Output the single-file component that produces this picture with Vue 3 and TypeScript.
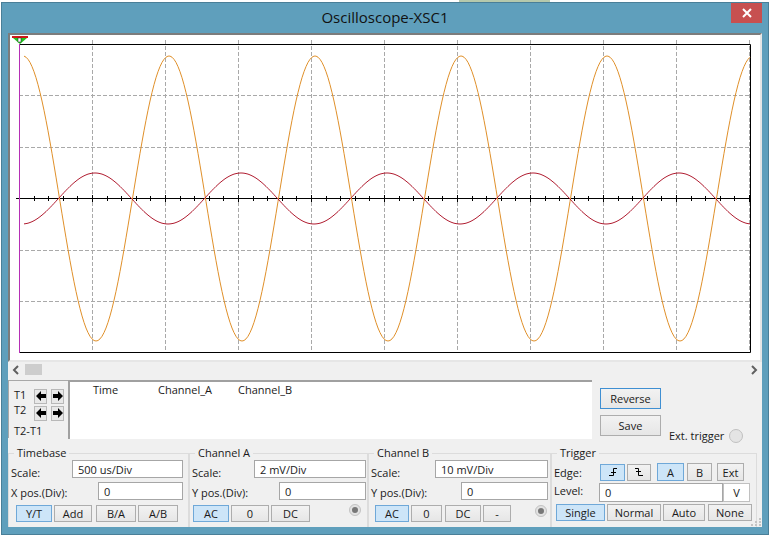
<template>
  <div class="page">
    <div class="window">
      <div class="titlebar">
        <span class="title">Oscilloscope-XSC1</span>
        <button class="close" type="button">
          <svg width="10" height="10" viewBox="0 0 10 10"><path d="M1 1l8 8M9 1l-8 8" stroke="#fff" stroke-width="2" /></svg>
        </button>
      </div>
      <div class="client">
        <div class="plot">
          <svg class="scope" width="749" height="325" viewBox="10 35 749 325">
            <path :d="gridV" class="grid" />
            <path :d="gridH" class="grid" />
            <path d="M19.5 44.5H750.5V352.5H19.5Z" fill="none" stroke="#000" />
            <path :d="ticks" stroke="#000" fill="none" />
            <path :d="orange" fill="none" stroke="#e0902a" />
            <path :d="red" fill="none" stroke="#b01c30" />
            <path d="M19.5 44V353" stroke="#b52fb5" />
            <path d="M12 36H28V38H12Z" fill="#d01818" />
            <path d="M13 38H27L20 44Z" fill="#22c422" />
            <rect x="18" y="38" width="3" height="4" fill="#fff" stroke="#222" stroke-width="0.5" />
          </svg>
        </div>
        <div class="hscroll">
          <svg width="8" height="10" viewBox="0 0 8 10"><path d="M6 1L2 5l4 4" fill="none" stroke="#606060" stroke-width="2" /></svg>
          <div class="thumb"></div>
          <svg class="right" width="8" height="10" viewBox="0 0 8 10"><path d="M2 1l4 4-4 4" fill="none" stroke="#606060" stroke-width="2" /></svg>
        </div>

        <div class="readout">
          <div class="cursors">
            <div class="cursor-row">
              <span class="t-label">T1</span>
              <button v-for="d in arrows" :key="'a' + d" class="arrow" type="button">
                <svg width="10" height="10" viewBox="0 0 10 10"><path :d="d" fill="#000" /></svg>
              </button>
            </div>
            <div class="cursor-row">
              <span class="t-label t2">T2</span>
              <button v-for="d in arrows" :key="'b' + d" class="arrow" type="button">
                <svg width="10" height="10" viewBox="0 0 10 10"><path :d="d" fill="#000" /></svg>
              </button>
            </div>
            <div class="t-diff">T2-T1</div>
          </div>
          <div class="list">
            <span class="col-time">Time</span>
            <span class="col-ch">Channel_A</span>
            <span>Channel_B</span>
          </div>
          <div class="actions">
            <div class="action-btns">
              <button type="button" class="btn focus">Reverse</button>
              <button type="button" class="btn">Save</button>
            </div>
            <div class="ext">
              <span>Ext. trigger</span>
              <span class="led"></span>
            </div>
          </div>
        </div>

        <div class="controls">
          <fieldset class="group tb">
            <legend>Timebase</legend>
            <div class="row"><label>Scale:</label><input class="wide" :value="'500 us/Div'" readonly /></div>
            <div class="row"><label>X pos.(Div):</label><input class="short" :value="'0'" readonly /></div>
            <div class="btns tb-btns">
              <button v-for="(b, i) in timebaseBtns" :key="b" type="button" :class="['btn', { on: i === 0 }]">{{ b }}</button>
            </div>
          </fieldset>

          <fieldset class="group cha">
            <legend>Channel A</legend>
            <div class="row"><label>Scale:</label><input class="wide" :value="'2 mV/Div'" readonly /></div>
            <div class="row"><label>Y pos.(Div):</label><input class="short" :value="'0'" readonly /></div>
            <div class="btns cha-btns">
              <button type="button" class="btn on">AC</button>
              <button type="button" class="btn">0</button>
              <button type="button" class="btn">DC</button>
              <span class="radio"></span>
            </div>
          </fieldset>

          <fieldset class="group chb">
            <legend>Channel B</legend>
            <div class="row"><label>Scale:</label><input class="wide" :value="'10 mV/Div'" readonly /></div>
            <div class="row"><label>Y pos.(Div):</label><input class="short" :value="'0'" readonly /></div>
            <div class="btns chb-btns">
              <button type="button" class="btn on">AC</button>
              <button type="button" class="btn">0</button>
              <button type="button" class="btn">DC</button>
              <button type="button" class="btn">-</button>
              <span class="radio"></span>
            </div>
          </fieldset>

          <fieldset class="group trig">
            <legend>Trigger</legend>
            <div class="edge-row">
              <label>Edge:</label>
              <button type="button" class="btn on edge">
                <svg width="12" height="12" viewBox="0 0 12 12"><path d="M2 9.500H6.500V2.500H10M4 6.500H9" fill="none" stroke="#000" /></svg>
              </button>
              <button type="button" class="btn edge">
                <svg width="12" height="12" viewBox="0 0 12 12"><path d="M2 2.500H5.500V9.500H10M3 5.500H8" fill="none" stroke="#000" /></svg>
              </button>
              <button type="button" class="btn on src a">A</button>
              <button type="button" class="btn src b">B</button>
              <button type="button" class="btn src x">Ext</button>
            </div>
            <div class="level-row">
              <label>Level:</label>
              <input class="level" :value="'0'" readonly />
              <span class="unit">V</span>
            </div>
            <div class="btns trig-btns">
              <button v-for="(b, i) in triggerBtns" :key="b" type="button" :class="['btn', { on: i === 0 }]">{{ b }}</button>
            </div>
          </fieldset>
        </div>
        <svg class="grip" width="10" height="8" viewBox="0 0 10 8"><path d="M8 0h2v2H8zM4 3h2v2H4zM8 3h2v2H8zM0 6h2v2H0zM4 6h2v2H4zM8 6h2v2H8z" fill="#c4c4c4" /></svg>
      </div>
    </div>
  </div>
</template>

<script setup lang="ts">
const timebaseBtns = ['Y/T', 'Add', 'B/A', 'A/B']
const triggerBtns = ['Single', 'Normal', 'Auto', 'None']
const arrows = ['M0 5l5-5v3h5v4H5v3z', 'M10 5L5 0v3H0v4h5v3z']

const top = 44
const bottom = 353
const left = 19
const right = 750

let gridV = ''
for (let x = 92.5; x < right; x += 73) gridV += `M${Math.round(x - 0.5) + 0.5} 40V${bottom}`
let gridH = ''
for (let i = 1; i < 6; i++) {
  const y = Math.floor(top + i * 51.5) + 0.5
  gridH += `M${left} ${y}H${right}`
}

// x axis with a tick every 1/5 division
let ticks = 'M16 198.500H750'
for (let x = left + 14.6; x < right; x += 14.6) {
  const major = Math.abs(((x - left) / 73) % 1) < 0.01 || Math.abs(((x - left) / 73) % 1) > 0.99
  const px = Math.round(x) + 0.5
  ticks += major ? `M${px} 195V202` : `M${px} 196V201`
}

function wave(amp: number, phase: number) {
  let d = ''
  for (let x = 24; x <= 750; x += 2) {
    const y = 198.5 + amp * Math.cos((2 * Math.PI * (x - phase)) / 146)
    d += `${d ? 'L' : 'M'}${x} ${y.toFixed(1)}`
  }
  return d
}

const orange = wave(-142.5, 23)
const red = wave(25.5, 22)
</script>

<style>
html, body { margin: 0; background: #fff; }
</style>

<style scoped>
.page { width: 770px; height: 535px; overflow: hidden; box-sizing: border-box; padding: 2px 1px 0; font-family: "Open Sans", "Liberation Sans", sans-serif; font-size: 11px; color: #1a1a1a; background: linear-gradient(to right, #fff 459px, #b6c9ac 459px, #b6c9ac 550px, #fff 550px); }
.window { height: 533px; box-sizing: border-box; background: #5f9fbc; border: 1px solid #4a7f98; padding: 0 6px 7px; }
.titlebar { height: 30px; display: flex; align-items: center; justify-content: center; position: relative; }
.title { font-size: 15px; color: #111; margin-top: -2px; }
.close { position: absolute; right: 0; top: 0; width: 31px; height: 20px; border: none; background: #c75050; padding: 0; display: flex; align-items: center; justify-content: center; }
.client { height: 494px; background: #f0f0f0; position: relative; display: flex; flex-direction: column; }
.plot { height: 329px; box-sizing: border-box; border: 2px solid #e6e6e6; border-top-color: #7c7c7c; border-left-color: #7c7c7c; background: #fff; }
.scope { display: block; }
.grid { stroke: #a9a9a9; stroke-dasharray: 4 2; fill: none; }
.hscroll { height: 17px; display: flex; align-items: center; padding: 0 4px 2px 4px; box-sizing: border-box; }
.thumb { width: 17px; height: 11px; background: #cdcdcd; margin-left: 5px; }
.hscroll .right { margin-left: auto; }
.readout { height: 67px; display: flex; align-items: flex-start; padding-top: 1px; box-sizing: border-box; }
.cursors { width: 60px; height: 58px; box-sizing: border-box; border-top: 1px solid #a8a8a8; border-left: 1px solid #a8a8a8; padding: 7px 0 0 5px; }
.cursor-row { display: flex; align-items: center; height: 16px; margin-bottom: 1px; }
.t-label { width: 20px; margin-top: -3px; }
.t-label.t2 { margin-top: -8px; }
.arrow { width: 13px; height: 15px; box-sizing: border-box; border: 1px solid #b8b8b8; background: #e8e8e8; padding: 0; margin-right: 4px; display: flex; align-items: center; justify-content: center; }
.t-diff { margin-top: 2px; }
.list { width: 524px; height: 59px; box-sizing: border-box; background: #fff; border-top: 2px solid #a0a0a0; border-left: 2px solid #a0a0a0; padding: 0 0 0 23px; line-height: 15px; }
.col-time { display: inline-block; width: 65px; }
.col-ch { display: inline-block; width: 80px; }
.actions { flex: 1; height: 66px; position: relative; }
.action-btns { display: flex; flex-direction: column; gap: 6px; width: 61px; margin: 8px 0 0 8px; }
.action-btns .btn { height: 21px; }
.ext { position: absolute; left: 77px; top: 48px; display: flex; align-items: center; gap: 5px; }
.led { width: 12px; height: 12px; border-radius: 50%; background: #e4e4e4; border: 1px solid #c0c0c0; }
.btn { font: inherit; color: inherit; box-sizing: border-box; border: 1px solid #adadad; background: linear-gradient(#f2f2f2, #e6e6e6); padding: 0; display: flex; align-items: center; justify-content: center; }
.btn.on { background: #cde5f8; border-color: #6fa8d8; }
.btn.focus { border: 1px solid #3f8fd2; }
.controls { display: grid; grid-template-columns: 181px 179px 183px 206px; }
.group { margin: 0; padding: 0; min-width: 0; height: 81px; box-sizing: border-box; border: 1px solid #dcdcdc; border-bottom: none; }
.group legend { padding: 0 3px; margin-left: 5px; line-height: 14px; }
.row { display: flex; justify-content: space-between; height: 18px; margin-bottom: 4px; padding: 0 5px 0 2px; }
.row label { margin-top: 5px; }
.row + .row label { margin-top: 3px; }
.cha .row { padding-right: 1px; }
.chb .row { padding-right: 2px; }
input { font: inherit; color: inherit; box-sizing: border-box; height: 18px; border: 1px solid #a6a6a6; background: #fff; padding: 0 0 0 5px; outline: none; border-radius: 0; margin: 0; }
.wide { width: 111px; }
.short { width: 85px; }
.cha .wide { width: 112px; }
.cha .short { width: 87px; }
.chb .wide { width: 113px; }
.chb .short { width: 87px; }
.btns { display: flex; height: 17px; margin-top: 5px; }
.btns .btn { height: 100%; }
.tb-btns { margin-left: 7px; gap: 2px; }
.tb-btns .btn:nth-child(1) { width: 36px; }
.tb-btns .btn:nth-child(2) { width: 38px; }
.tb-btns .btn:nth-child(3) { width: 40px; margin-left: 2px; }
.tb-btns .btn:nth-child(4) { width: 40px; }
.cha-btns { margin-left: 3px; gap: 2px; }
.cha-btns .btn { width: 36px; }
.cha-btns .btn:nth-child(2) { width: 38px; }
.cha-btns .btn:nth-child(3) { width: 39px; }
.radio { width: 12px; height: 12px; border-radius: 50%; box-sizing: border-box; background: #777; border: 3px solid #e2e2e2; outline: 1px solid #c4c4c4; outline-offset: -1px; margin-left: auto; }
.cha-btns .radio { margin-right: 6px; margin-top: -1px; }
.chb-btns { margin-left: 6px; gap: 2px; }
.chb-btns .btn:nth-child(1) { width: 34px; }
.chb-btns .btn:nth-child(2) { width: 31px; }
.chb-btns .btn:nth-child(3) { width: 36px; margin-left: 1px; }
.chb-btns .btn:nth-child(4) { width: 28px; }
.chb-btns .radio { margin-right: 3px; }
.edge-row { display: flex; align-items: center; height: 18px; margin-top: 3px; padding-left: 2px; }
.edge-row label { width: 46px; }
.edge { width: 25px; height: 17px; margin-right: 2px; }
.edge + .edge { width: 24px; }
.src { height: 18px; width: 27px; }
.src.a { margin-left: 4px; }
.src.b { margin-left: 3px; width: 25px; }
.src.x { margin-left: 5px; }
.level-row { display: flex; align-items: center; height: 19px; margin-top: 2px; padding-left: 2px; }
.level-row label { width: 45px; margin-top: -4px; }
.level { width: 124px; height: 19px; }
.unit { width: 27px; height: 19px; box-sizing: border-box; background: #fff; border: 1px solid #c0c0c0; display: flex; align-items: center; justify-content: center; }
.trig-btns { margin: 2px 0 0 4px; gap: 2px; }
.trig-btns .btn:nth-child(1) { width: 49px; }
.trig-btns .btn:nth-child(2) { width: 54px; }
.trig-btns .btn:nth-child(3) { width: 42px; }
.trig-btns .btn:nth-child(4) { width: 44px; margin-left: 1px; }
.grip { position: absolute; right: 1px; bottom: 1px; }
</style>
